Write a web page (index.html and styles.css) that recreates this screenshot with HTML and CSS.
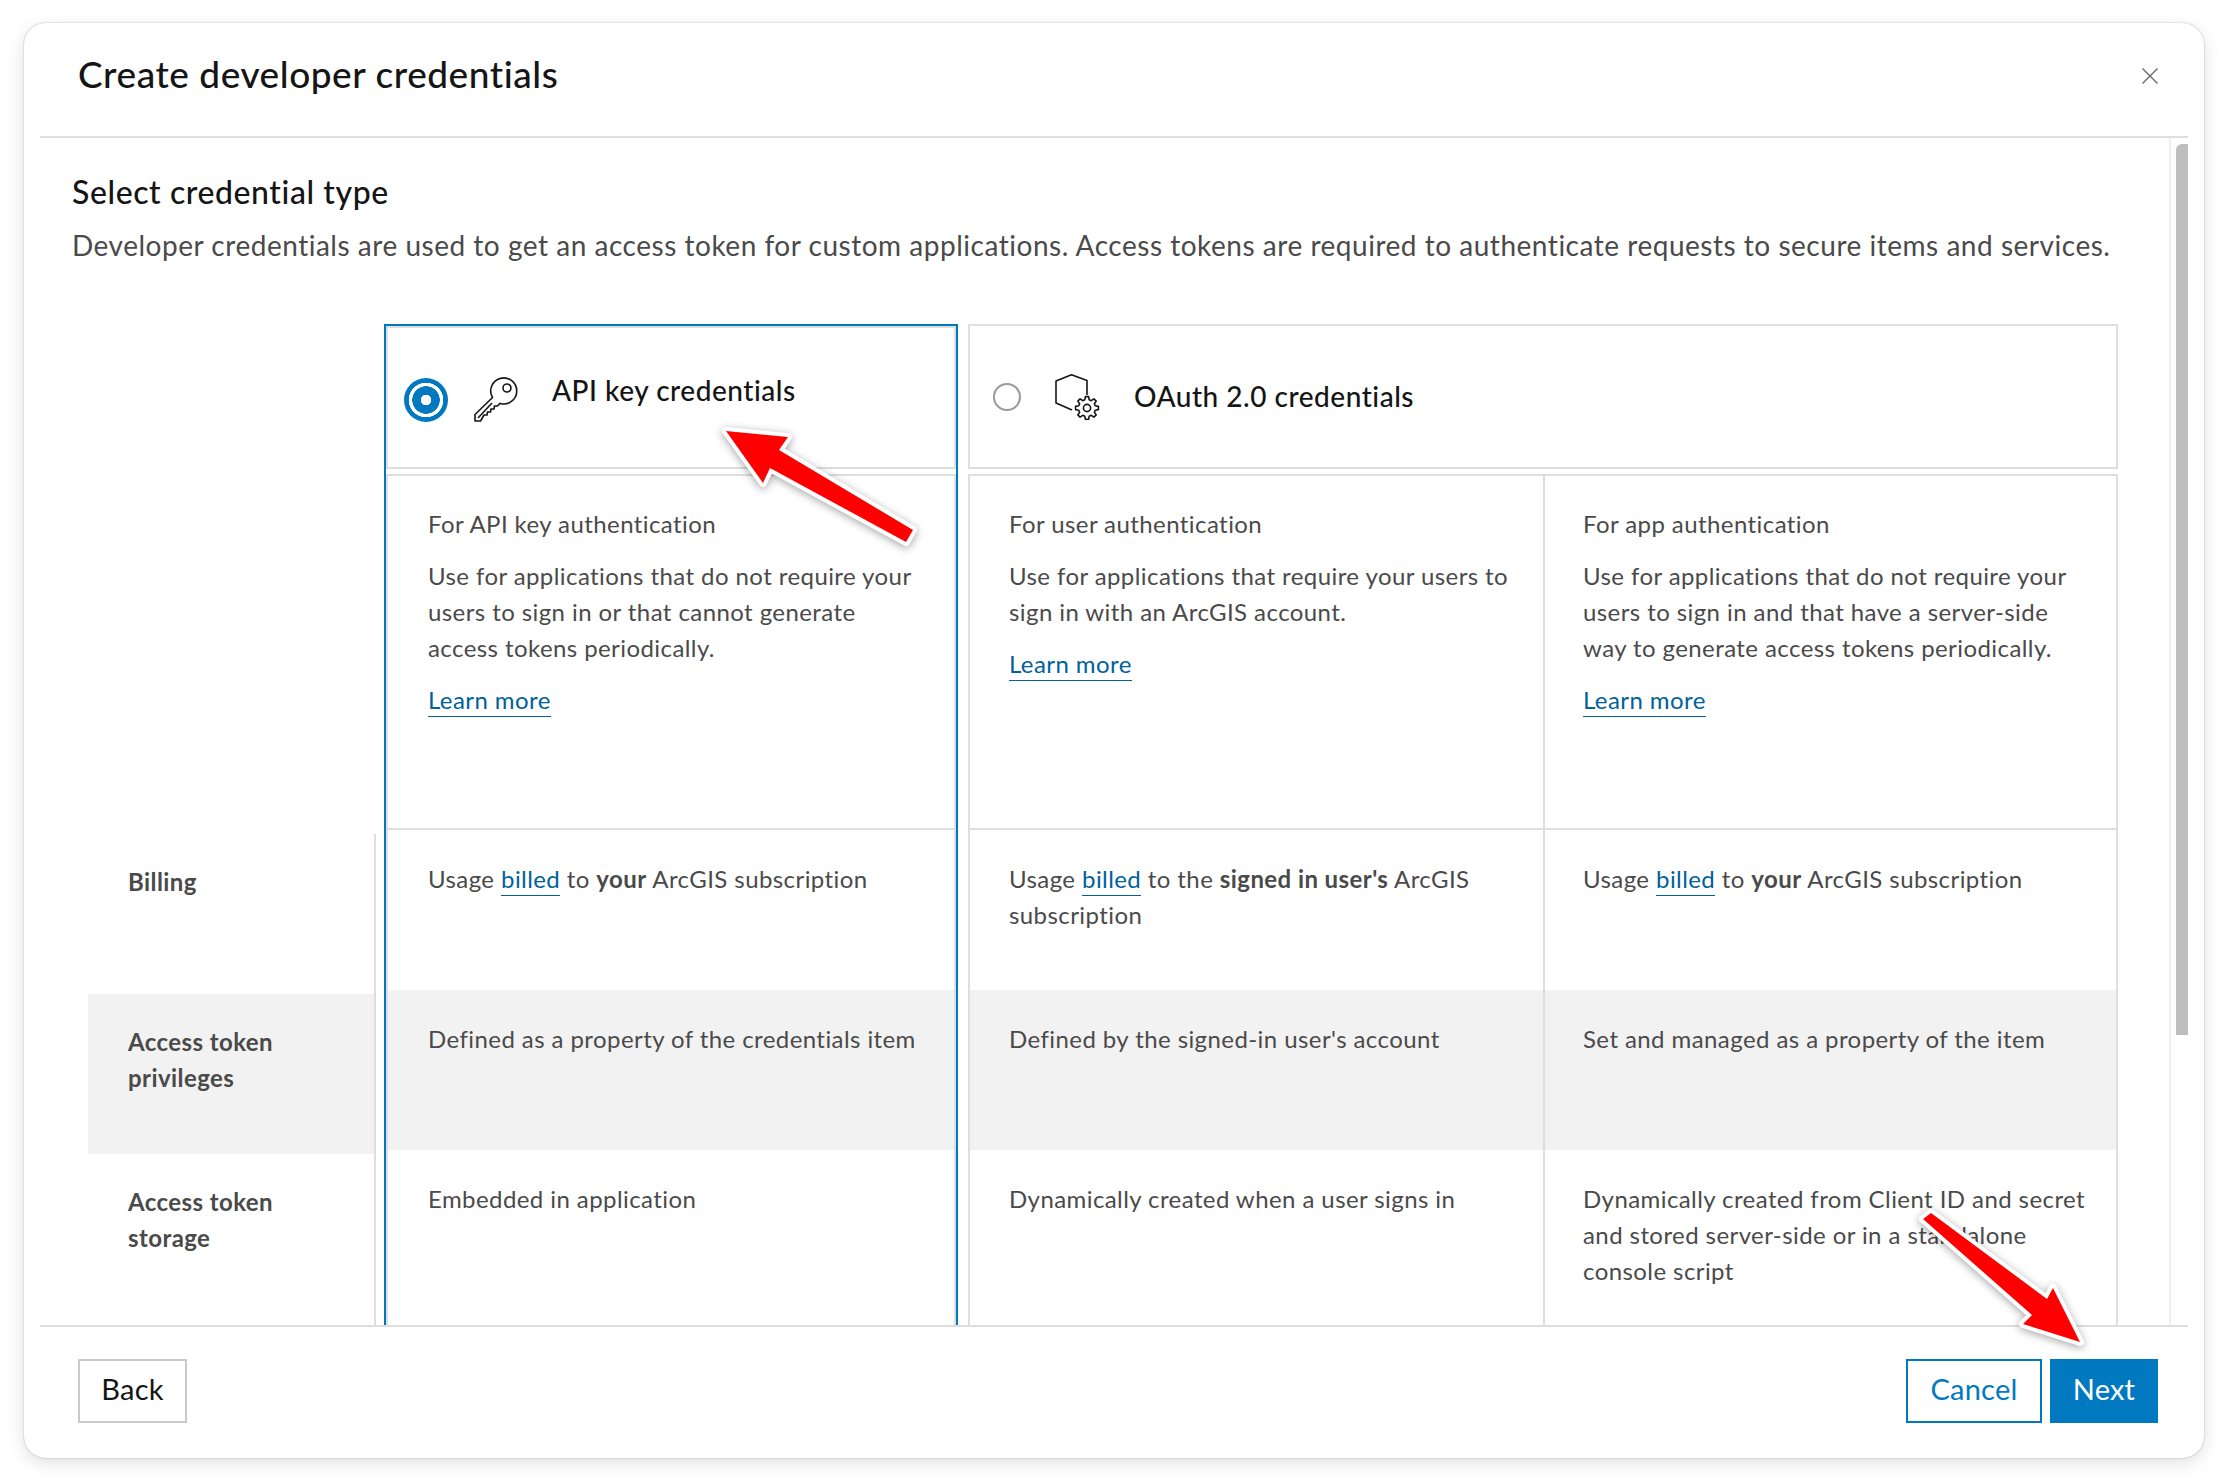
FILE: index.html
```html
<!DOCTYPE html>
<html lang="en">
<head>
<meta charset="utf-8">
<title>Create developer credentials</title>
<link rel="stylesheet" href="styles.css">
</head>
<body>
<div class="dialog">
  <header class="dialog-head">
    <h1 class="dialog-title">Create developer credentials</h1>
    <svg class="close" viewBox="0 0 16 16" width="16" height="16"><path d="M.5.5l15 15M15.5.5l-15 15"/></svg>
  </header>
  <div class="dialog-body">
    <div class="content">
      <h2 class="section-title">Select credential type</h2>
      <p class="section-desc">Developer credentials are used to get an access token for custom applications. Access tokens are required to authenticate requests to secure items and services.</p>
      <div class="table">
        <div class="labels">
          <div class="label label-bill">Billing</div>
          <div class="label label-gray">Access token<br>privileges</div>
          <div class="label">Access token<br>storage</div>
        </div>
        <div class="col-api">
          <div class="head head-api">
            <span class="radio-on"></span>
            <svg class="icon-key" viewBox="0 0 46 46" width="46" height="46"><path d="M19.5 20.5A13 13 0 1 1 27 26.4L24.5 29H21.5L21 32H18L17.5 35H14.5L14 38H11L7.5 44H2V37.5Z"/><path d="M5 41L19 26"/><circle cx="34" cy="11" r="4"/></svg>
            <span class="head-title head-title-up">API key credentials</span>
          </div>
          <div class="cell r-desc">
            <p>For API key authentication</p>
            <p>Use for applications that do not require your<br>users to sign in or that cannot generate<br>access tokens periodically.</p>
            <p><a class="link">Learn more</a></p>
          </div>
          <div class="cell r-bill">Usage <a class="link">billed</a> to <b>your</b> ArcGIS subscription</div>
          <div class="cell r-priv">Defined as a property of the credentials item</div>
          <div class="cell r-store">Embedded in application</div>
        </div>
        <div class="col-rest">
          <div class="head head-oauth">
            <span class="radio-off"></span>
            <svg class="icon-hex" viewBox="0 0 46 46" width="46" height="46">
              <path d="M32 21V6.5L16.5 .8 1 7V29L17 36"/>
              <g transform="translate(32 34)"><polygon points="-2.2,-8.21 -1.6,-11.39 1.6,-11.39 2.2,-8.21 4.25,-7.36 6.92,-9.18 9.18,-6.92 7.36,-4.25 8.21,-2.2 11.39,-1.6 11.39,1.6 8.21,2.2 7.36,4.25 9.18,6.92 6.92,9.18 4.25,7.36 2.2,8.21 1.6,11.39 -1.6,11.39 -2.2,8.21 -4.25,7.36 -6.92,9.18 -9.18,6.92 -7.36,4.25 -8.21,2.2 -11.39,1.6 -11.39,-1.6 -8.21,-2.2 -7.36,-4.25 -9.18,-6.92 -6.92,-9.18 -4.25,-7.36"/><circle r="3.6"/></g>
            </svg>
            <span class="head-title">OAuth 2.0 credentials</span>
          </div>
          <div class="cell r-desc">
            <p>For user authentication</p>
            <p>Use for applications that require your users to<br>sign in with an ArcGIS account.</p>
            <p><a class="link">Learn more</a></p>
          </div>
          <div class="cell r-desc cell-last">
            <p>For app authentication</p>
            <p>Use for applications that do not require your<br>users to sign in and that have a server-side<br>way to generate access tokens periodically.</p>
            <p><a class="link">Learn more</a></p>
          </div>
          <div class="cell r-bill">Usage <a class="link">billed</a> to the <b>signed in user's</b> ArcGIS<br>subscription</div>
          <div class="cell r-bill cell-last">Usage <a class="link">billed</a> to <b>your</b> ArcGIS subscription</div>
          <div class="cell r-priv">Defined by the signed-in user's account</div>
          <div class="cell r-priv cell-last">Set and managed as a property of the item</div>
          <div class="cell r-store">Dynamically created when a user signs in</div>
          <div class="cell r-store cell-last">Dynamically created from Client ID and secret<br>and stored server-side or in a standalone<br>console script</div>
        </div>
      </div>
    </div>
    <div class="scrollbar"><div class="thumb"></div></div>
  </div>
  <footer class="dialog-foot">
    <button class="btn btn-back">Back</button>
    <div class="foot-right">
      <button class="btn btn-cancel">Cancel</button>
      <button class="btn btn-next">Next</button>
    </div>
  </footer>
</div>
<svg class="arrows" viewBox="0 0 2228 1482" width="2228" height="1482">
  <polygon points="726,431 788,437 779,450 913,530 906,542 770,468 763,483"/>
  <polygon points="1923,1219 1931,1213 2047,1299 2053,1288 2080,1342 2023,1324 2032,1315"/>
</svg>
</body>
</html>
```
FILE: styles.css
```css
* { box-sizing: border-box; }
html, body { margin: 0; padding: 0; background: #fff; }
body {
  width: 2228px;
  height: 1482px;
  overflow: hidden;
  font-family: Lato, "Noto Sans", sans-serif;
  color: #4a4a4a;
}
.dialog {
  margin: 23px 0 0 24px;
  width: 2180px;
  height: 1435px;
  background: #fff;
  border-radius: 22px;
  box-shadow: 0 0 2px rgba(0,0,0,.28), 0 5px 18px rgba(0,0,0,.12);
  display: flex;
  flex-direction: column;
}
.dialog-head {
  margin: 0 16px;
  height: 115px;
  flex: none;
  border-bottom: 2px solid #dedede;
  padding: 0 30px 8px 38px;
  display: flex;
  align-items: center;
  justify-content: space-between;
}
.dialog-title {
  margin: 0 0 5px;
  font-size: 37px;
  font-weight: 500;
  color: #151515;
  letter-spacing: .55px;
}
.close { stroke: #6a6a6a; stroke-width: 1.4; fill: none; }
.dialog-body {
  margin: 0 16px;
  flex: 1;
  min-height: 0;
  display: flex;
  overflow: hidden;
}
.content {
  flex: 1;
  min-width: 0;
  padding: 32px 0 0 32px;
  overflow: hidden;
}
.section-title {
  margin: 0;
  font-size: 32px;
  line-height: 44px;
  font-weight: 500;
  color: #151515;
  letter-spacing: .58px;
}
.section-desc {
  margin: 11px 0 59px;
  font-size: 28px;
  line-height: 40px;
  white-space: nowrap;
  letter-spacing: .52px;
}
.scrollbar {
  width: 19px;
  flex: none;
  border-left: 2px solid #eee;
  padding: 6px 0 0 5px;
}
.thumb {
  width: 12px;
  height: 891px;
  background: #bebebe;
  border-radius: 6px 0 0 0;
}
.table {
  margin-left: 16px;
  display: flex;
  align-items: flex-start;
  font-size: 24px;
  line-height: 36px;
  letter-spacing: .42px;
}
.labels {
  width: 288px;
  margin-top: 510px;
  margin-right: 8px;
  flex: none;
  border-right: 2px solid #dedede;
  height: 600px;
  font-weight: 700;
}
.label {
  height: 160px;
  padding: 30px 0 0 40px;
}
.label-gray { background: #f2f2f2; }
.col-api {
  width: 574px;
  flex: none;
  margin-right: 10px;
  border: 2px solid #0079c1;
  border-bottom: none;
  height: 1100px;
}
.col-rest {
  width: 1150px;
  flex: none;
  display: grid;
  grid-template-columns: 575px 575px;
  align-content: start;
}
.head {
  border: 2px solid #dedede;
  display: flex;
  align-items: center;
}
.head-api { height: 143px; margin-bottom: 5px; padding-left: 16px; }
.head-oauth { grid-column: 1 / 3; height: 145px; margin-bottom: 5px; padding-left: 23px; }
.head-title {
  font-size: 28px;
  font-weight: 500;
  color: #151515;
  letter-spacing: .52px;
  margin-bottom: 2px;
}
.head-title-up { margin-bottom: 15px; }
.radio-on {
  width: 44px;
  height: 44px;
  flex: none;
  border-radius: 50%;
  background: radial-gradient(circle, #fff 0 5px, #0079c1 5.5px 13.5px, #fff 14px 17px, #0079c1 17.5px);
  margin: 4px 25px 0 0;
}
.radio-off {
  width: 28px;
  height: 28px;
  flex: none;
  border-radius: 50%;
  border: 2px solid #9a9a9a;
  margin-right: 34px;
}
.icon-key, .icon-hex { flex: none; fill: #fff; stroke: #151515; stroke-width: 1.6; stroke-linejoin: round; }
.icon-key { margin-right: 33px; margin-top: 4px; }
.icon-hex { fill: none; margin-right: 33px; }
.icon-hex polygon { fill: #fff; }
.cell {
  border-left: 2px solid #dedede;
  padding: 31px 10px 0 39px;
  white-space: nowrap;
}
.col-api .cell { border-right: 2px solid #dedede; padding-left: 40px; }
.cell-last { border-right: 2px solid #dedede; padding-left: 38px; }
.cell p { margin: 0 0 16px; }
.r-desc { height: 354px; padding-top: 30px; border-top: 2px solid #dedede; }
.r-bill { height: 162px; border-top: 2px solid #dedede; }
.r-priv { height: 160px; background: #f2f2f2; }
.r-store { height: 200px; }
.link {
  color: #00619b;
  border-bottom: 1px solid #00619b;
  padding-bottom: 2px;
}
b { font-weight: 700; }
.dialog-foot {
  margin: 0 16px;
  flex: none;
  height: 133px;
  border-top: 2px solid #dedede;
  padding: 32px 30px 0 38px;
  display: flex;
  justify-content: space-between;
  align-items: flex-start;
}
.foot-right { display: flex; gap: 8px; }
.btn {
  height: 64px;
  font-family: inherit;
  font-size: 29px;
  letter-spacing: .2px;
  background: #fff;
  border: 2px solid #c9c9c9;
  color: #151515;
  padding: 0 0 5px;
}
.btn-back { width: 109px; }
.btn-cancel { width: 136px; border-color: #0079c1; color: #0079c1; }
.btn-next { width: 108px; border-color: #0079c1; background: #0079c1; color: #fff; }
.arrows {
  position: absolute;
  left: 0;
  top: 0;
  pointer-events: none;
}
.arrows polygon {
  fill: #f00;
  stroke: #fff;
  stroke-width: 8;
  stroke-linejoin: round;
  paint-order: stroke;
  filter: drop-shadow(0 2px 4px rgba(0,0,0,.35));
}
```
